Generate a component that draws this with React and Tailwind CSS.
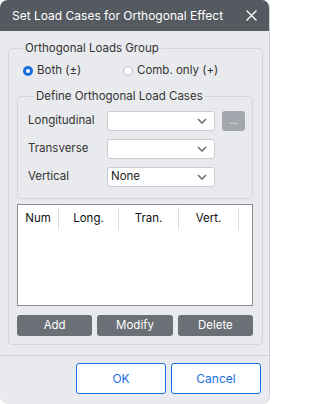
import React, { useState } from "react";

const font = { fontFamily: "Inter, 'Noto Sans', sans-serif" };

function Chevron() {
  return (
    <svg width="10" height="6" viewBox="0 0 10 6" className="text-[#6b6f76]">
      <path d="M1 1l4 4 4-4" fill="none" stroke="currentColor" strokeWidth="1.6" />
    </svg>
  );
}

function Select({ value }) {
  return (
    <div className="w-[108px] h-[20px] bg-white border border-[#c9ccd1] rounded-[3px] flex items-center justify-between pl-[3px] pr-[7px] text-[11.5px] text-[#222]">
      <span>{value}</span>
      <Chevron />
    </div>
  );
}

function Radio({ checked, label, onClick, className = "" }) {
  return (
    <label className={"flex items-center gap-[4px] cursor-pointer " + className} onClick={onClick}>
      {checked ? (
        <span className="w-[10px] h-[10px] rounded-full bg-[#1a6fe0] flex items-center justify-center">
          <span className="w-[4px] h-[4px] rounded-full bg-white" />
        </span>
      ) : (
        <span className="w-[10px] h-[10px] rounded-full bg-white border border-[#b8bbc0]" />
      )}
      <span>{label}</span>
    </label>
  );
}

export default function App() {
  const [mode, setMode] = useState("both");
  const rows = [
    { label: "Longitudinal", value: "", more: true },
    { label: "Transverse", value: "" },
    { label: "Vertical", value: "None" },
  ];

  return (
    <div className="w-[271px] h-[404px] bg-white" style={font}>
      <div className="w-[270px] h-[404px] rounded-[8px] overflow-hidden bg-[#e9eaed] border-r border-[#cfd1d5] flex flex-col text-[11.5px] text-[#333]">
        {/* Title bar */}
        <div className="h-[31px] shrink-0 bg-[#555a61] flex items-center justify-between pl-[12px] pr-[12px] text-white text-[12px]">
          <span>Set Load Cases for Orthogonal Effect</span>
          <svg width="11" height="11" viewBox="0 0 11 11">
            <path d="M0.5 0.5l10 10M10.5 0.5l-10 10" stroke="white" strokeWidth="1.3" />
          </svg>
        </div>

        {/* Outer group */}
        <div className="px-[8px] pt-[9px]">
          <fieldset className="border border-[#d4d6da] rounded-[4px] pl-[8px] pr-[9px] pb-[8px] h-[305px]">
            <legend className="px-[2px] ml-[6px] leading-[16px] text-[#333]">Orthogonal Loads Group</legend>

            <div className="flex items-center pl-[6px] pt-[6px] h-[24px]">
              <Radio className="w-[100px]" checked={mode === "both"} label="Both (±)" onClick={() => setMode("both")} />
              <Radio checked={mode === "comb"} label="Comb. only (+)" onClick={() => setMode("comb")} />
            </div>

            {/* Inner group */}
            <fieldset className="mt-[8px] border border-[#d4d6da] rounded-[4px] pl-[10px] pr-[6px] pb-[9px] h-[111px]">
              <legend className="px-[2px] ml-[6px] leading-[16px] text-[#333]">Define Orthogonal Load Cases</legend>
              <div className="flex flex-col gap-[8px] pt-[7px]">
                {rows.map((r) => (
                  <div key={r.label} className="flex items-center h-[20px]">
                    <span className="w-[79px] shrink-0">{r.label}</span>
                    <Select value={r.value} />
                    {r.more && (
                      <div className="ml-[7px] w-[23px] h-[20px] rounded-[3px] bg-[#a3a7ad] text-white text-[10px] flex items-center justify-center leading-none pb-[3px]">
                        ...
                      </div>
                    )}
                  </div>
                ))}
              </div>
            </fieldset>

            {/* Table */}
            <div className="mt-[5px] h-[102px] bg-white border border-[#8a8d92]">
              <div className="grid grid-cols-[41px_60px_60px_60px] h-[25px] pt-[2px] text-[11.5px] text-[#111]">
                {["Num", "Long.", "Tran.", "Vert."].map((h) => (
                  <div key={h} className="flex items-center justify-center border-r border-[#dcdde0]">
                    {h}
                  </div>
                ))}
              </div>
            </div>

            {/* Action buttons */}
            <div className="mt-[9px] grid grid-cols-3 gap-[5px] w-[236px]">
              {["Add", "Modify", "Delete"].map((b) => (
                <button key={b} className="h-[21px] rounded-[3px] bg-[#6b6f76] text-white text-[11.5px]">
                  {b}
                </button>
              ))}
            </div>
          </fieldset>
        </div>

        {/* Footer */}
        <div className="mt-[10px] border-t border-[#cfd1d5] flex justify-end gap-[5px] pr-[8px] pt-[7px]">
          <button className="w-[90px] h-[31px] bg-white border border-[#1a6fe0] rounded-[3px] text-[#1a6fe0] text-[12px]">OK</button>
          <button className="w-[90px] h-[31px] bg-white border border-[#1a6fe0] rounded-[3px] text-[#1a6fe0] text-[12px]">Cancel</button>
        </div>
      </div>
    </div>
  );
}
